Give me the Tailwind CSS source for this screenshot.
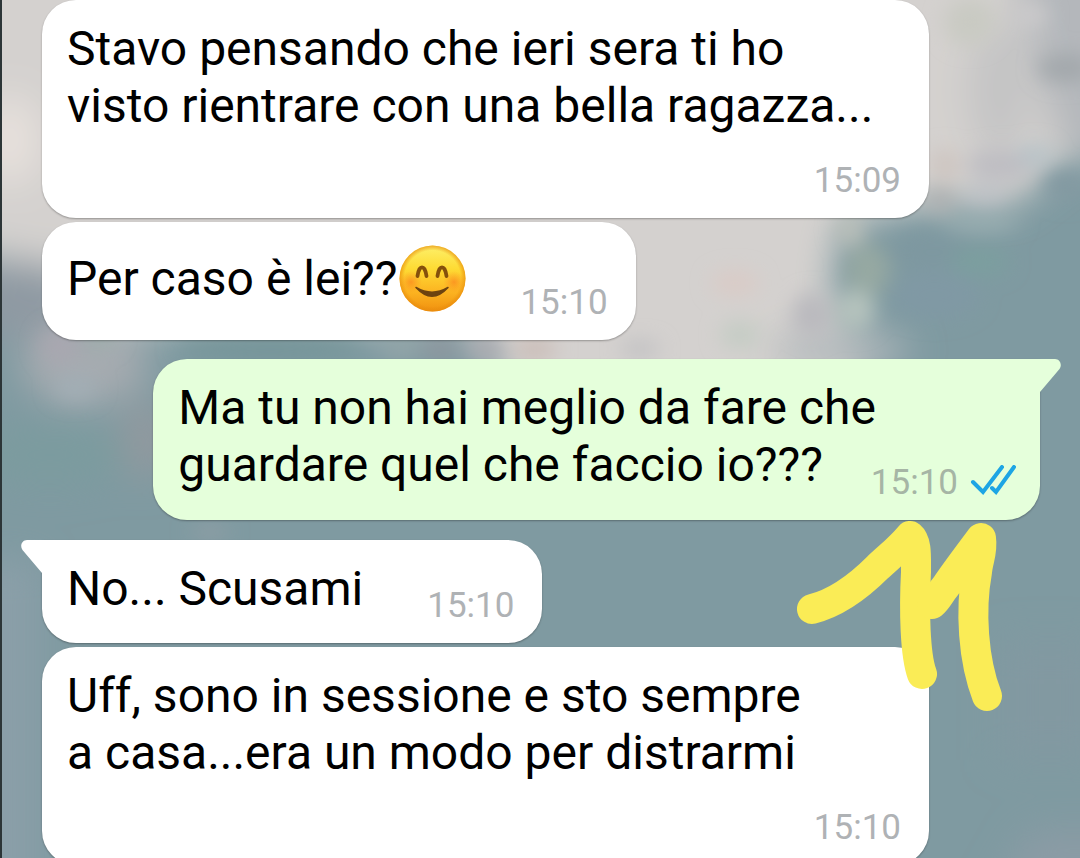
<!DOCTYPE html>
<html lang="it">
<head>
  <meta charset="UTF-8" />
  <meta name="viewport" content="width=device-width, initial-scale=1" />
  <title>Chat</title>
  <script src="https://cdn.jsdelivr.net/npm/@tailwindcss/browser@4"></script>
</head>
<body class="relative h-screen overflow-hidden bg-[#7e9aa1] font-[Roboto,sans-serif] text-[48px] leading-[57px] text-black">

  <!-- sfondo sfocato -->
  <svg class="absolute inset-0 -z-10 h-full w-full" viewBox="0 0 1080 858" preserveAspectRatio="none" aria-hidden="true">
    <defs>
      <filter id="soft" x="-50%" y="-50%" width="200%" height="200%"><feGaussianBlur stdDeviation="18" /></filter>
      <filter id="softer" x="-50%" y="-50%" width="200%" height="200%"><feGaussianBlur stdDeviation="10" /></filter>
    </defs>
    <rect width="1080" height="858" fill="#7f9aa1" />
    <g filter="url(#soft)">
      <path d="M-60 -60H1140V145L1070 160L1010 205L930 205L840 225L830 300L860 330L860 400H520L470 325H110L60 265L-60 250Z" fill="#d4d1cf" />
      <path d="M1010 -40H1140V150L1060 150Z" fill="#b4b7bb" />
      <ellipse cx="1000" cy="90" rx="32" ry="70" fill="#c4c4c5" />
      <ellipse cx="10" cy="140" rx="30" ry="45" fill="#e6e0dc" />
      <ellipse cx="20" cy="300" rx="60" ry="40" fill="#8f9aa3" />
      <ellipse cx="85" cy="365" rx="65" ry="40" fill="#a6abb0" />
      <ellipse cx="145" cy="440" rx="25" ry="40" fill="#93999f" />
      <ellipse cx="50" cy="455" rx="80" ry="30" fill="#7c9b9f" />
      <path d="M-40 560H40V900H-40Z" fill="#8a9fa8" />
      <path d="M1030 830H1140V900H990Z" fill="#8b9ba5" />
      <path d="M1000 640H1100V760H1000Z" fill="#8299a1" />
      <ellipse cx="840" cy="350" rx="70" ry="20" fill="#b0b8bb" />
    </g>
    <g filter="url(#softer)">
      <ellipse cx="970" cy="22" rx="26" ry="24" fill="#c9cac3" />
      <ellipse cx="1030" cy="15" rx="18" ry="12" fill="#cccbcc" />
      <ellipse cx="1065" cy="68" rx="28" ry="14" fill="#a2a7ab" />
      <ellipse cx="1000" cy="165" rx="34" ry="16" fill="#bebdc2" />
      <ellipse cx="1035" cy="155" rx="18" ry="10" fill="#b6c2c8" />
      <ellipse cx="985" cy="195" rx="22" ry="8" fill="#bfc2c8" />
      <ellipse cx="945" cy="165" rx="14" ry="16" fill="#cdc4bf" />
      <ellipse cx="940" cy="200" rx="16" ry="12" fill="#aeb0b1" />
      <ellipse cx="980" cy="222" rx="40" ry="10" fill="#98adb0" />
      <ellipse cx="1065" cy="185" rx="22" ry="16" fill="#8299a1" />
      <ellipse cx="850" cy="230" rx="14" ry="16" fill="#b9bfb9" />
      <ellipse cx="868" cy="270" rx="22" ry="26" fill="#96a9a2" />
      <ellipse cx="930" cy="250" rx="42" ry="20" fill="#7e98a0" />
      <ellipse cx="935" cy="295" rx="45" ry="24" fill="#8099a4" />
      <ellipse cx="980" cy="262" rx="30" ry="14" fill="#7b9f9f" />
      <ellipse cx="735" cy="283" rx="24" ry="12" fill="#dacbc6" />
      <ellipse cx="855" cy="310" rx="20" ry="20" fill="#b5c3bd" />
      <ellipse cx="812" cy="315" rx="20" ry="22" fill="#bab9be" />
      <ellipse cx="740" cy="335" rx="20" ry="14" fill="#c4ccc4" />
      <ellipse cx="640" cy="349" rx="20" ry="8" fill="#bfbfc1" />
      <ellipse cx="270" cy="349" rx="95" ry="14" fill="#76959a" />
      <ellipse cx="400" cy="349" rx="20" ry="12" fill="#93a5a8" />
      <ellipse cx="440" cy="349" rx="20" ry="12" fill="#8d969e" />
      <ellipse cx="485" cy="349" rx="20" ry="12" fill="#a9a9af" />
      <ellipse cx="535" cy="349" rx="22" ry="12" fill="#cbbdb8" />
      <ellipse cx="60" cy="345" rx="20" ry="18" fill="#a9a7b0" />
      <ellipse cx="100" cy="335" rx="16" ry="14" fill="#9fadac" />
      <ellipse cx="75" cy="388" rx="22" ry="12" fill="#a3afb6" />
      <ellipse cx="210" cy="532" rx="20" ry="8" fill="#8f9ea5" />
    </g>
  </svg>
  <div class="absolute inset-y-0 left-0 w-[2px] bg-[#2c3537]"></div>

  <!-- messaggi -->
  <main class="flex flex-col pr-10 pl-[42px]">
    <article class="flow-root w-fit max-w-[887px] rounded-[34px] bg-white pt-5 pr-7 pb-4 pl-[25px] shadow-[0_1px_2px_rgba(0,0,0,0.3)]">
      Stavo pensando che ieri sera ti ho<br />
      visto rientrare con una bella ragazza...
      <time class="float-right mt-[26px] ml-12 text-[35px] leading-[42px] text-[#afb2b5]">15:09</time>
    </article>

    <article class="mt-1 flex w-fit items-end rounded-[34px] bg-white pt-5 pr-7 pb-4 pl-[25px] shadow-[0_1px_2px_rgba(0,0,0,0.3)]">
      <p class="mb-[10px] flex h-[72px] items-center gap-[2px]">
        Per caso è lei??
        <svg class="size-[67px]" viewBox="0 0 67 67" role="img" aria-label="faccina che sorride">
          <defs>
            <linearGradient id="face" x1="0" y1="0" x2="0" y2="1">
              <stop offset="0" stop-color="#fdf06a" />
              <stop offset="0.35" stop-color="#fedb34" />
              <stop offset="0.7" stop-color="#fcb421" />
              <stop offset="1" stop-color="#f0900f" />
            </linearGradient>
            <radialGradient id="rim">
              <stop offset="0.85" stop-color="#e88b0c" stop-opacity="0" />
              <stop offset="1" stop-color="#e88b0c" stop-opacity="0.7" />
            </radialGradient>
            <radialGradient id="cheek">
              <stop offset="0" stop-color="#fb7a1c" stop-opacity="0.6" />
              <stop offset="1" stop-color="#fb8a1c" stop-opacity="0" />
            </radialGradient>
          </defs>
          <circle cx="33.500" cy="33.500" r="33" fill="url(#face)" />
          <circle cx="33.500" cy="33.500" r="33" fill="url(#rim)" />
          <circle cx="12" cy="37" r="11" fill="url(#cheek)" />
          <circle cx="55" cy="37" r="11" fill="url(#cheek)" />
          <path d="M18.500 31C20 19.500 26 19.500 27.500 31M38.500 31C40 19.500 46 19.500 47.500 31" fill="none" stroke="#85500c" stroke-width="3.800" stroke-linecap="round" />
          <path d="M17 42.500Q33 60 49 42.500Q33 52 17 42.500Z" fill="#6d4310" stroke="#6d4310" stroke-width="1.500" stroke-linejoin="round" />
        </svg>
      </p>
      <time class="ml-[54px] text-[35px] leading-[42px] text-[#afb2b5]">15:10</time>
    </article>

    <article class="relative mt-[19px] flow-root w-fit max-w-[887px] self-end rounded-[34px] rounded-tr-none bg-[#e5ffdb] pt-5 pr-6 pb-4 pl-[25px] shadow-[0_1px_2px_rgba(0,0,0,0.3)]">
      <svg class="absolute top-0 -right-[21px] h-[34px] w-[22px]" viewBox="0 0 22 34" aria-hidden="true">
        <path d="M0 0H16C21 0 23.500 6 20.500 10L1 33V34H0Z" fill="#e5ffdb" />
      </svg>
      Ma tu non hai meglio da fare che<br />
      guardare quel che faccio io???
      <span class="float-right mt-[26px] ml-12 flex items-center gap-3">
        <time class="text-[35px] leading-[42px] text-[#a6b5a5]">15:10</time>
        <svg class="h-9 w-[46px]" viewBox="0 0 46 36" fill="none" stroke="#1da5e4" stroke-width="4" role="img" aria-label="letto">
          <path d="M3 17L13 27L32 2M22 23L26 27L44 2" stroke-linecap="round" stroke-linejoin="miter" />
        </svg>
      </span>

      <!-- scarabocchio giallo -->
      <svg class="absolute top-[151px] right-5 z-10 h-[210px] w-[240px]" viewBox="0 0 240 210" fill="none" stroke="#faec56" stroke-width="30" stroke-linecap="round" stroke-linejoin="round" aria-hidden="true">
        <path d="M32 99C60 92 82 73 98 57C112 44 120 38 130 26C137 32 136 45 136 62C134 100 135 145 142 164" />
        <path d="M152 94C158 89 160 83 166 76C174 64 180 56 201 28C203 42 198 50 197 62C190 100 193 150 207 186" />
      </svg>
    </article>

    <article class="relative mt-5 flex w-fit items-end rounded-[34px] rounded-tl-none bg-white pt-5 pr-7 pb-4 pl-[25px] shadow-[0_1px_2px_rgba(0,0,0,0.3)]">
      <svg class="absolute top-0 -left-[21px] h-[34px] w-[22px]" viewBox="0 0 22 34" aria-hidden="true">
        <path d="M22 0H6C1 0 -1.500 6 1.500 10L21 33V34H22Z" fill="#ffffff" />
      </svg>
      <p class="mb-[10px]">No... Scusami</p>
      <time class="ml-16 text-[35px] leading-[42px] text-[#afb2b5]">15:10</time>
    </article>

    <article class="mt-1 flow-root w-fit max-w-[887px] rounded-[34px] bg-white pt-5 pr-7 pb-4 pl-[25px] shadow-[0_1px_2px_rgba(0,0,0,0.3)]">
      Uff, sono in sessione e sto sempre<br />
      a casa...era un modo per distrarmi
      <time class="float-right mt-[26px] ml-12 text-[35px] leading-[42px] text-[#afb2b5]">15:10</time>
    </article>
  </main>
</body>
</html>
